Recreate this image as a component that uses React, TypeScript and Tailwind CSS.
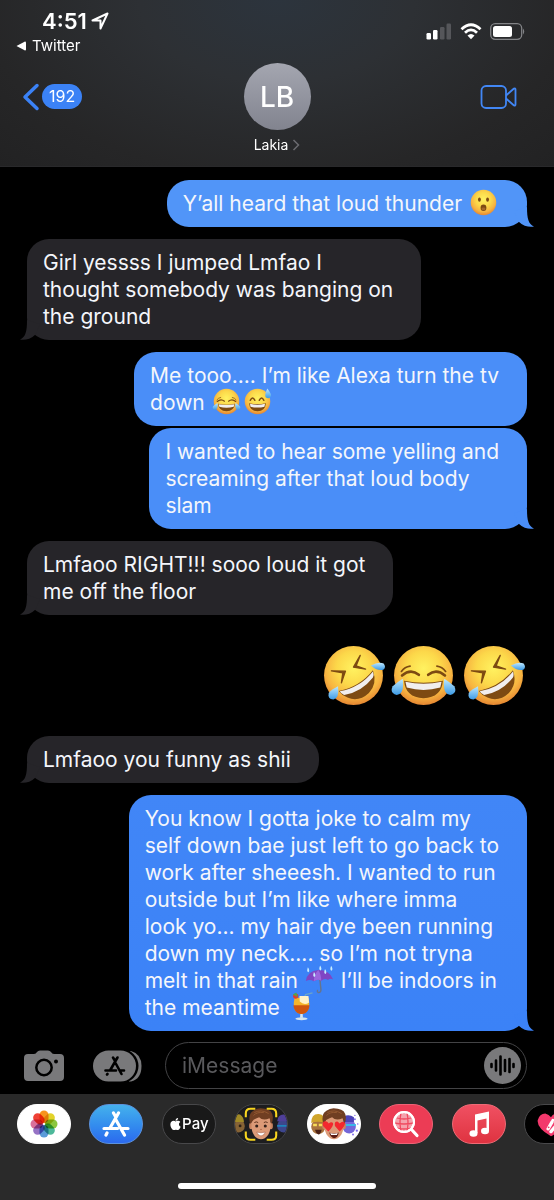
import type { ReactNode } from "react";
import { FaApple } from "react-icons/fa";

/* ---------- Emoji ---------- */

function EmojiDefs() {
  return (
    <svg className="absolute h-0 w-0" aria-hidden="true">
      <defs>
        <radialGradient id="face" cx="0.5" cy="0.38" r="0.64">
          <stop offset="0" stopColor="#fff260" />
          <stop offset="0.45" stopColor="#fcd84a" />
          <stop offset="0.75" stopColor="#f7b441" />
          <stop offset="1" stopColor="#e3802f" />
        </radialGradient>
        <linearGradient id="tear" x1="0" y1="0" x2="0" y2="1">
          <stop offset="0" stopColor="#bfe9ff" />
          <stop offset="1" stopColor="#3d9be6" />
        </linearGradient>
      </defs>
    </svg>
  );
}

type EmojiProps = { className: string };

function Joy({ className }: EmojiProps) {
  return (
    <svg viewBox="0 0 100 100" className={className} role="img" aria-label="😂">
      <circle cx="50" cy="50" r="44" fill="url(#face)" />
      <g fill="none" stroke="#7d4a12" strokeLinecap="round">
        <path d="M17 44Q22 37 30 36M83 44Q78 37 70 36" strokeWidth="2.500" />
        <path d="M18 50Q31 39 43 49M82 50Q69 39 57 49" strokeWidth="4" />
      </g>
      <path d="M21 58Q50 64 79 58Q77 83 50 84Q23 83 21 58Z" fill="#7d4a12" />
      <path d="M23 59.500Q50 65 77 59.500L75 68Q50 75 25 68Z" fill="#f1eeee" />
      <path d="M19 55Q22 78 10 79Q-1 76 4 66Q11 60 19 55Z" fill="url(#tear)" />
      <path d="M81 55Q78 78 90 79Q101 76 96 66Q89 60 81 55Z" fill="url(#tear)" />
    </svg>
  );
}

function Rofl({ className }: EmojiProps) {
  return (
    <svg viewBox="0 0 100 100" className={className} role="img" aria-label="🤣">
      <circle cx="50" cy="50" r="44" fill="url(#face)" />
      <path d="M60 20L50 37.500L68 40.500L54 35.500Z" fill="#7d4a12" stroke="#7d4a12" strokeWidth="2" strokeLinejoin="round" />
      <path d="M17 43L38 43.500L32 61L34 46Z" fill="#7d4a12" stroke="#7d4a12" strokeWidth="2" strokeLinejoin="round" />
      <path d="M28 73Q59 67 79 42Q86 62 73 76Q58 90 41 83Q33 80 28 73Z" fill="#7d4a12" />
      <path d="M29.500 73.500Q60 68 79 44Q81 49 79 53Q62 75 36 79Q31 77 29.500 73.500Z" fill="#f1eeee" />
      <path d="M27 66Q29 84 20 86Q11 85 13 76Q17 71 27 66Z" fill="url(#tear)" />
      <path d="M76 35Q87 29 95 32Q99 37 95 41Q86 44 76 35Z" fill="url(#tear)" />
    </svg>
  );
}

function OpenMouth({ className }: EmojiProps) {
  return (
    <svg viewBox="0 0 100 100" className={className} role="img" aria-label="😮">
      <circle cx="50" cy="50" r="44" fill="url(#face)" />
      <ellipse cx="36" cy="40" rx="5" ry="7.500" fill="#7d4a12" />
      <ellipse cx="64" cy="40" rx="5" ry="7.500" fill="#7d4a12" />
      <ellipse cx="50" cy="68" rx="10" ry="11" fill="#7d4a12" />
      <ellipse cx="50" cy="72" rx="7" ry="5" fill="#a4682b" />
    </svg>
  );
}

function SweatSmile({ className }: EmojiProps) {
  return (
    <svg viewBox="0 0 100 100" className={className} role="img" aria-label="😅">
      <circle cx="50" cy="50" r="44" fill="url(#face)" />
      <path d="M25 46Q33 30 41 46M56 46Q64 30 72 46" fill="none" stroke="#7d4a12" strokeWidth="5" strokeLinecap="round" />
      <path d="M21 56Q50 62 79 56Q77 83 50 84Q23 83 21 56Z" fill="#7d4a12" />
      <path d="M24 58Q50 64 76 58L74 68Q50 74 26 68Z" fill="#f1eeee" />
      <path d="M84 5Q100 26 96 33Q90 42 79 36Q72 29 84 5Z" fill="url(#tear)" />
    </svg>
  );
}

function Umbrella({ className }: EmojiProps) {
  return (
    <svg viewBox="0 0 100 100" className={className} role="img" aria-label="☔">
      <path d="M51 45L55 86Q54 96 46 95Q41 93 43 88" fill="none" stroke="#66748c" strokeWidth="5" strokeLinecap="round" />
      <path d="M3 55Q8 20 46 17Q86 17 97 50Q88 44 79 52Q69 44 56 54Q44 46 30 56Q18 48 3 55Z" fill="#7f45c4" />
      <path d="M30 56Q32 30 46 17Q56 32 56 54Q44 46 30 56Z" fill="#9c66de" />
      <g fill="#c6ecff">
        <path d="M10 8Q18 20 12 25Q4 24 10 8ZM52 2Q60 14 54 19Q46 18 52 2ZM90 3Q98 15 92 20Q84 19 90 3Z" />
        <path d="M31 24Q39 36 33 41Q25 40 31 24ZM69 14Q77 26 71 31Q63 30 69 14Z" />
      </g>
    </svg>
  );
}

function Drink({ className }: EmojiProps) {
  return (
    <svg viewBox="0 0 100 100" className={className} role="img" aria-label="🍹">
      <path d="M55 30L64 9L88 3" fill="none" stroke="#6ea5c8" strokeWidth="4" />
      <path d="M46 76H54L55 89H45Z" fill="#d9e7ef" />
      <ellipse cx="50" cy="92" rx="21" ry="5" fill="#d5e4ee" />
      <path d="M26 20H74Q82 56 66 70Q50 82 34 70Q18 56 26 20Z" fill="#f5b52c" />
      <path d="M22 46H78Q76 64 64 72Q50 80 36 72Q24 64 22 46Z" fill="#d0560f" />
      <path d="M43 14H74L76 36Q60 48 44 33Z" fill="#fff3c9" />
      <circle cx="30" cy="14" r="9" fill="#df3c32" />
      <path d="M20 9L32 2L37 17Z" fill="#51a647" />
    </svg>
  );
}

const inlineEmoji = "mx-px -my-[6px] inline-block h-[29px] w-[29px] align-baseline";

/* ---------- Messages ---------- */

const tones = {
  light: { bubble: "bg-[#5195f8]", tail: "fill-[#5195f8]" },
  mid: { bubble: "bg-[#4a8ef8]", tail: "fill-[#4a8ef8]" },
  deep: { bubble: "bg-linear-to-b from-[#4186f7] to-[#3b82f7]", tail: "fill-[#3b82f7]" },
  gray: { bubble: "bg-[#262529]", tail: "fill-[#262529]" },
};

type BubbleProps = {
  tone: keyof typeof tones;
  tail?: boolean;
  children: ReactNode;
};

function Bubble({ tone, tail = true, children }: BubbleProps) {
  const mine = tone !== "gray";
  return (
    <li
      className={`relative max-w-full rounded-[22px] py-[10px] pr-7 pl-4 text-[21px] leading-[27px] whitespace-pre text-[#f4f6fb] ${tones[tone].bubble} ${mine ? "self-end" : "self-start"}`}
    >
      {children}
      {tail && (
        <svg
          viewBox="0 0 20 20"
          aria-hidden="true"
          className={`absolute bottom-0 h-5 w-5 ${tones[tone].tail} ${mine ? "-right-[7px]" : "-left-[7px] -scale-x-100"}`}
        >
          <path d="M13 0C13 12 14.500 17 20 19.500C16 20.500 9.500 19.500 4.500 14.500L0 4Z" />
        </svg>
      )}
    </li>
  );
}

/* ---------- App drawer icons ---------- */

function AppStoreGlyph({ className }: { className: string }) {
  return (
    <svg viewBox="0 0 28 26" className={className} fill="none" stroke="currentColor" strokeWidth="3.200" strokeLinecap="round" aria-hidden="true">
      <path d="M11.500 2L13.500 5.500M16.500 2L8 17M2 17.500H15.500M19.500 17.500H26M14 9L22.500 24M5 22L4 24" />
    </svg>
  );
}

const petals = [
  { angle: 0, color: "#f7941d" },
  { angle: 45, color: "#e3d32a" },
  { angle: 90, color: "#8cc63f" },
  { angle: 135, color: "#4db89a" },
  { angle: 180, color: "#5b9bd9" },
  { angle: 225, color: "#9673c5" },
  { angle: 270, color: "#d9709b" },
  { angle: 315, color: "#ef4136" },
];

function PhotosGlyph() {
  return (
    <svg viewBox="0 0 28 28" className="h-7 w-7" aria-hidden="true">
      {petals.map((p) => (
        <rect
          key={p.angle}
          x="9.500"
          y="0.500"
          width="9"
          height="12.500"
          rx="4.500"
          fill={p.color}
          className="mix-blend-multiply"
          transform={`rotate(${p.angle} 14 14)`}
        />
      ))}
    </svg>
  );
}

function MemojiHead({ hearts = false }: { hearts?: boolean }) {
  return (
    <g>
      <ellipse cx="16.500" cy="22" rx="2" ry="3.500" fill="#c98460" />
      <ellipse cx="37.500" cy="22" rx="2" ry="3.500" fill="#c98460" />
      <path d="M17 15Q17 9 27 9Q37 9 37 15V24Q36 32 31 35Q27 37 23 35Q18 32 17 24Z" fill="#dc9a77" />
      <path d="M15.500 20Q13 9 19 6Q24 2 31 4Q39 5 39.500 13Q39.500 18 38 20Q37 17 36 14Q29 17 25 13Q19 15 18 17Z" fill="#703e22" />
      <path d="M20 8Q27 4 35 9M19 11Q23 7 30 8" fill="none" stroke="#935832" strokeWidth="1" />
      {hearts ? (
        <g>
          <path d="M21 28L15.500 22Q14 17 18 17Q20 17 21.500 19.500Q24 17 26 19Q27 22 21 28Z" fill="#f3282e" />
          <path d="M33 28L28 22Q27 17 31 17.500L33 19.500Q36 16 38.500 19Q39 22 33 28Z" fill="#f3282e" />
          <path d="M22 29Q27 31 32 29Q31 35 27 35Q23 34 22 29Z" fill="#5a1c14" />
          <path d="M23 29.500Q27 31 31 29.500L30 31.500H24Z" fill="#fff" />
        </g>
      ) : (
        <g>
          <path d="M20 18.500Q22 17 24 18.500M30 18.500Q32 17 34 18.500" fill="none" stroke="#5b301c" strokeWidth="1" />
          <circle cx="22.500" cy="22" r="1.600" fill="#32201a" />
          <circle cx="31.500" cy="22" r="1.600" fill="#32201a" />
          <path d="M26 25.500Q27 26.500 28 25.500" fill="none" stroke="#b56c4c" strokeWidth="1" />
          <path d="M22.500 28.500Q27 30 31.500 28.500Q30 32.500 27 32.500Q24 32.500 22.500 28.500Z" fill="#fff" stroke="#9c5138" strokeWidth="0.500" />
        </g>
      )}
    </g>
  );
}

function MemojiGlyph() {
  return (
    <svg viewBox="0 0 54 40" className="h-full w-full" aria-hidden="true">
      <rect width="54" height="40" fill="#1d1d1f" />
      <circle cx="3" cy="22" r="7" fill="#866335" />
      <path d="M-4 18Q-2 8 5 10Q9 13 9 18Z" fill="#a18a27" />
      <circle cx="5" cy="22" r="1.500" fill="#2d2116" />
      <circle cx="51" cy="22" r="7" fill="#3d468d" />
      <path d="M44 17Q45 9 52 10L58 17Z" fill="#4f3f98" />
      <path d="M44 22H54" stroke="#1f83bb" strokeWidth="2" />
      <MemojiHead />
      <path d="M11 13V9Q11 4 16 4H21M33 4H38Q43 4 43 9V13M11 28V32Q11 36.500 16 36.500H21M33 36.500H38Q43 36.500 43 32V28" fill="none" stroke="#f8d51f" strokeWidth="2.200" />
    </svg>
  );
}

function StickersGlyph() {
  return (
    <svg viewBox="0 0 54 40" className="h-full w-full" aria-hidden="true">
      <rect width="54" height="40" fill="#fff" />
      <circle cx="10.500" cy="23" r="7.500" fill="#a9733e" />
      <path d="M3 19Q3 9 11 9.500Q18 10 17 19Q10 16 3 19Z" fill="#d0a52b" />
      <path d="M5 21H9M11 21H15" stroke="#f8dc57" strokeWidth="2.500" />
      <path d="M7 26H14Q13 31 10.500 31Q8 30 7 26Z" fill="#4c2318" />
      <circle cx="43" cy="23" r="7" fill="#7467d8" />
      <path d="M37 12Q43 9 48 13V18H36Z" fill="#4d43b9" />
      <path d="M36 21H50" stroke="#39b6e8" strokeWidth="2" />
      <g fill="#7b68ea">
        <circle cx="49" cy="15" r="1" />
        <circle cx="52" cy="20" r="0.800" />
        <circle cx="51" cy="27" r="1.200" />
        <circle cx="47" cy="31" r="1" />
        <circle cx="49" cy="11" r="0.700" />
      </g>
      <MemojiHead hearts />
    </svg>
  );
}

function ImagesGlyph() {
  return (
    <svg viewBox="0 0 28 28" className="h-7 w-7" fill="none" stroke="#fff" aria-hidden="true">
      <circle cx="12" cy="12" r="10" strokeWidth="2" fill="#f5a3ae" />
      <path d="M5 8Q12 10 19 8M2 13Q12 15 22 13M5 18Q12 20 19 18M9 3Q7 12 9 21M15 3Q17 12 15 21" stroke="#f04a60" strokeWidth="1.300" />
      <circle cx="12" cy="12" r="10" strokeWidth="2" />
      <path d="M19.500 19.500L25 25.500" strokeWidth="3.200" strokeLinecap="round" />
    </svg>
  );
}

function MusicGlyph() {
  return (
    <svg viewBox="0 0 24 28" className="h-7 w-6" fill="#fff" aria-hidden="true">
      <path d="M8 4.500L22 1.500V21H19.500V8.500L10.500 10.500V23H8Z" />
      <ellipse cx="6.500" cy="23.500" rx="4" ry="3.200" />
      <ellipse cx="18" cy="21" rx="4" ry="3.200" />
    </svg>
  );
}

function HeartGlyph() {
  return (
    <svg viewBox="0 0 54 40" className="h-full w-full" aria-hidden="true">
      <path d="M27 33Q12 24 13 16Q15 9 21 9Q25 10 27 13Q29 9 34 9Q40 10 41 16Q42 24 27 33Z" fill="#f3386c" />
      <path d="M24 25L28 18M27 28L32 22" stroke="#fff" strokeWidth="3.500" strokeLinecap="round" />
      <circle cx="24.500" cy="23.500" r="1" fill="#f3386c" />
      <circle cx="29" cy="16" r="1.500" fill="#fff" />
    </svg>
  );
}

const apps = [
  { name: "Photos", style: "bg-white border-white", icon: <PhotosGlyph /> },
  {
    name: "App Store",
    style: "bg-linear-to-b from-[#45b1ec] to-[#2c69ee] border-[#5b92dd] text-white",
    icon: <AppStoreGlyph className="h-[26px] w-7" />,
  },
  {
    name: "Apple Pay",
    style: "bg-[#191919] border-[#48484a] text-white",
    icon: (
      <span className="flex items-center text-[15px] font-medium">
        <FaApple className="h-[14px] w-[13px]" />
        Pay
      </span>
    ),
  },
  { name: "Memoji", style: "bg-[#1d1d1f] border-[#48484a]", icon: <MemojiGlyph /> },
  { name: "Stickers", style: "bg-white border-white", icon: <StickersGlyph /> },
  { name: "Images", style: "bg-[#ec3c55] border-[#ef6376]", icon: <ImagesGlyph /> },
  { name: "Music", style: "bg-linear-to-b from-[#f05062] to-[#df3240] border-[#ef6b76]", icon: <MusicGlyph /> },
  { name: "Digital Touch", style: "bg-black border-[#48484a]", icon: <HeartGlyph /> },
];

/* ---------- Screen ---------- */

function StatusIcons() {
  return (
    <div className="flex items-center gap-2 pt-1 pr-7" aria-hidden="true">
      <svg viewBox="0 0 26 17" className="h-[17px] w-[26px]">
        <rect x="0.500" y="10" width="4.500" height="6.500" rx="1.200" fill="#fff" />
        <rect x="7" y="7" width="4.500" height="9.500" rx="1.200" fill="#fff" />
        <rect x="14" y="4" width="4.500" height="12.500" rx="1.200" fill="#55565a" />
        <rect x="20.500" y="0.500" width="4.500" height="16" rx="1.200" fill="#55565a" />
      </svg>
      <svg viewBox="0 0 22 17" className="h-[17px] w-[22px]" fill="none" stroke="#fff" strokeWidth="2.800">
        <path d="M1.500 6.200Q11 -2.800 20.500 6.200M5 9.700Q11 4 17 9.700" />
        <path d="M7.500 12.500Q11 9.500 14.500 12.500L11 16.300Z" fill="#fff" stroke="none" />
      </svg>
      <svg viewBox="0 0 36 17" className="h-[17px] w-9">
        <rect x="0.700" y="0.700" width="31" height="15.600" rx="4.500" fill="none" stroke="#828386" strokeWidth="1.300" />
        <rect x="3" y="3" width="19" height="11" rx="2.500" fill="#fff" />
        <path d="M33 5.500Q35.500 8.500 33 11.500Z" fill="#828386" />
      </svg>
    </div>
  );
}

export default function App() {
  return (
    <div className="flex min-h-screen flex-col overflow-hidden bg-black font-['Inter','Liberation_Sans',sans-serif] text-white">
      <EmojiDefs />

      <header className="border-b border-[#29292b] bg-[radial-gradient(ellipse_at_50%_0%,#2c343d_0%,#2d3034_35%,#262627_75%,#222223_100%)] pb-[6px]">
        <div className="flex items-center justify-between">
          <div className="pt-2 pl-4">
            <div className="flex items-center gap-1 pl-[26px] text-[22px] leading-[26px] font-semibold">
              4:51
              <svg viewBox="0 0 18 18" className="h-[18px] w-[18px]" fill="none" stroke="#fff" strokeWidth="2" strokeLinejoin="round" aria-hidden="true">
                <path d="M16.500 1.500L9.500 16.500V8.500H1.500Z" />
              </svg>
            </div>
            <button type="button" className="flex items-center gap-[6px] text-[15px] leading-6">
              <svg viewBox="0 0 10 10" className="h-[10px] w-[10px]" fill="#fff" aria-hidden="true">
                <path d="M0.500 5L9 0.500Q10 0.500 10 1.500V8.500Q10 9.500 9 9.500Z" />
              </svg>
              Twitter
            </button>
          </div>
          <StatusIcons />
        </div>

        <div className="grid grid-cols-[1fr_auto_1fr] pt-[5px]">
          <button type="button" aria-label="Back, 192 unread" className="flex h-[67px] items-center gap-[2px] justify-self-start pl-[22px]">
            <svg viewBox="0 0 18 28" className="h-7 w-[18px]" fill="none" stroke="#3b82f6" strokeWidth="3.500" strokeLinecap="round" strokeLinejoin="round" aria-hidden="true">
              <path d="M15 2.500L3 14L15 25.500" />
            </svg>
            <span className="rounded-full bg-[#3b82f6] px-[7px] text-[16px] leading-[25px]">192</span>
          </button>
          <button type="button" className="flex flex-col items-center">
            <span className="flex h-[67px] w-[67px] items-center justify-center rounded-full bg-linear-to-b from-[#a4a6b0] to-[#82848f] text-[28px] font-medium">
              LB
            </span>
            <span className="flex items-center gap-1 text-[14px] leading-[30px]">
              Lakia
              <svg viewBox="0 0 8 12" className="h-3 w-2" fill="none" stroke="#6b6b6f" strokeWidth="1.500" aria-hidden="true">
                <path d="M1.500 1L6.500 6L1.500 11" />
              </svg>
            </span>
          </button>
          <button type="button" aria-label="Video call" className="flex h-[67px] items-center justify-self-end pr-[37px]">
            <svg viewBox="0 0 37 26" className="h-[26px] w-[37px]" fill="none" stroke="#4287f5" strokeWidth="1.800" strokeLinejoin="round" aria-hidden="true">
              <rect x="1.500" y="2" width="24.500" height="22" rx="4.500" />
              <path d="M26 11.500L34 4.500Q35.500 4 35.500 5.500V20.500Q35.500 22 34 21.500L26 14.500" />
            </svg>
          </button>
        </div>
      </header>

      <main className="flex-1 px-[27px] pt-[13px]">
        <ul className="flex flex-col gap-3">
          <Bubble tone="light">
            Y’all heard that loud thunder <OpenMouth className={inlineEmoji} />
          </Bubble>
          <Bubble tone="gray">{"Girl yessss I jumped Lmfao I\nthought somebody was banging on\nthe ground"}</Bubble>
          <li className="flex flex-col">
            <ul className="flex flex-col gap-[2px]">
              <Bubble tone="mid" tail={false}>
                {"Me tooo.... I’m like Alexa turn the tv\n"}
                {"down "}
                <Joy className={inlineEmoji} />
                <SweatSmile className={inlineEmoji} />
              </Bubble>
              <Bubble tone="mid">{"I wanted to hear some yelling and\nscreaming after that loud body\nslam"}</Bubble>
            </ul>
          </li>
          <Bubble tone="gray">{"Lmfaoo RIGHT!!! sooo loud it got\nme off the floor"}</Bubble>
          <li className="flex gap-[3px] self-end py-[15px]">
            <Rofl className="h-[67px] w-[67px]" />
            <Joy className="h-[67px] w-[67px]" />
            <Rofl className="h-[67px] w-[67px]" />
          </li>
          <Bubble tone="gray">Lmfaoo you funny as shii</Bubble>
          <Bubble tone="deep">
            {"You know I gotta joke to calm my\nself down bae just left to go back to\nwork after sheeesh. I wanted to run\noutside but I’m like where imma\nlook yo... my hair dye been running\ndown my neck.... so I’m not tryna\n"}
            {"melt in that rain "}
            <Umbrella className={inlineEmoji} />
            {" I’ll be indoors in\n"}
            {"the meantime "}
            <Drink className={inlineEmoji} />
          </Bubble>
        </ul>
      </main>

      <form className="flex items-center pt-[11px] pr-[27px] pb-[5px] pl-6" onSubmit={(e) => e.preventDefault()}>
        <button type="button" aria-label="Camera">
          <svg viewBox="0 0 40 32" className="h-8 w-10" aria-hidden="true">
            <path d="M4 4H10Q12 4 13 2Q14 0.500 16 0.500H24Q26 0.500 27 2Q28 4 30 4H36Q40 4 40 8V27Q40 31 36 31H4Q0 31 0 27V8Q0 4 4 4Z" fill="#79797b" />
            <circle cx="20" cy="17.500" r="7.700" fill="none" stroke="#000" strokeWidth="2.500" />
            <circle cx="32" cy="11.500" r="2" fill="#000" />
          </svg>
        </button>
        <button type="button" aria-label="Apps" className="ml-[29px]">
          <svg viewBox="0 0 49 32" className="h-8 w-[49px]" aria-hidden="true">
            <path d="M37 1H38Q48.500 4 48.500 16Q48.500 29 38 31.500H36Z" fill="#79797b" />
            <rect x="-1.500" y="-1" width="47" height="34" rx="17" fill="#000" />
            <rect x="0" y="0.500" width="43" height="31" rx="15.500" fill="#79797b" />
            <path d="M20 7.500L21.500 10M24.500 7.500L17 20.500M12.500 20.500H23M27 20.500H31M22.500 13L28.500 24M14.500 24L14 24.500" fill="none" stroke="#000" strokeWidth="2.600" strokeLinecap="round" />
          </svg>
        </button>
        <div className="ml-[23px] flex h-[47px] min-w-0 flex-1 items-center rounded-full border border-[#434345] pr-[5px] pl-4">
          <input
            type="text"
            aria-label="Message"
            placeholder="iMessage"
            className="min-w-0 flex-1 bg-transparent text-[21px] leading-[27px] outline-none placeholder:text-[#59595c]"
          />
          <button type="button" aria-label="Record audio">
            <svg viewBox="0 0 37 37" className="h-[37px] w-[37px]" aria-hidden="true">
              <circle cx="18.500" cy="18.500" r="18.500" fill="#79797b" />
              <path d="M7.500 17V20M12 13.500V23.500M16.500 9.500V27.500M21 13V24M25.500 12V25M29.500 17V20" stroke="#000" strokeWidth="2.600" strokeLinecap="round" />
            </svg>
          </button>
        </div>
      </form>

      <footer className="bg-[#2a2a2a] pt-[10px] pb-[11px]">
        <nav aria-label="iMessage apps" className="-mr-6 flex justify-between pl-[17px]">
          {apps.map((app) => (
            <button
              key={app.name}
              type="button"
              aria-label={app.name}
              className={`flex h-10 w-[54px] shrink-0 items-center justify-center overflow-hidden rounded-[20px] border ${app.style}`}
            >
              {app.icon}
            </button>
          ))}
        </nav>
        <div className="mx-auto mt-[39px] h-[6px] w-[198px] rounded-full bg-white" />
      </footer>
    </div>
  );
}
